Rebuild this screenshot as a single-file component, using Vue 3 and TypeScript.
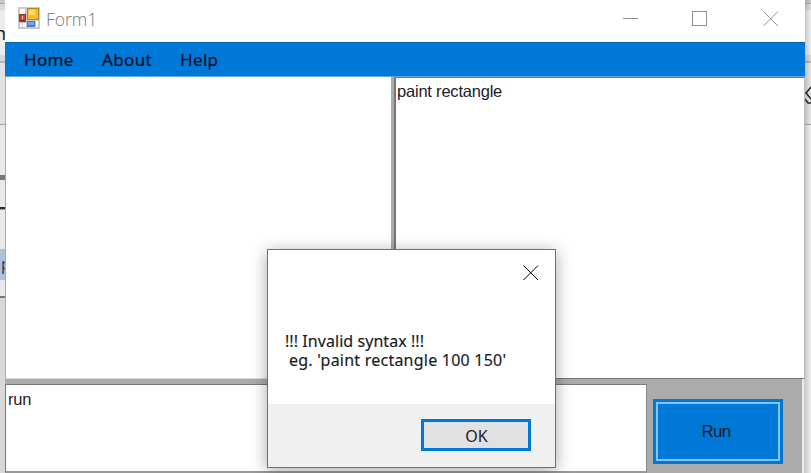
<script setup lang="ts">
import { ref } from 'vue'

const menuItems = ['Home', 'About', 'Help']
const program = ref<string>('paint rectangle')
const command = ref<string>('run')
</script>

<template>
  <div class="desktop">
    <div class="behind left">
      <span class="letter top-letter">n</span>
      <i class="bar gray"></i>
      <i class="bar black"></i>
      <span class="selected">p</span>
      <i class="bar bottom"></i>
    </div>

    <main class="window">
      <header class="titlebar">
        <svg class="app-icon" width="22" height="22" viewBox="0 0 22 22">
          <rect width="22" height="22" fill="#c8c8c8" />
          <path d="M2 2h5v5H2zM9 2h1v10H9zM2 16h2v4H2zM5 16h3v4H5zM18 14h2v6h-2z" fill="#fff" />
          <rect x="1" y="7" width="7" height="8" fill="#a92b22" />
          <rect x="2" y="8" width="5" height="5" fill="#cc443a" />
          <rect x="4" y="9" width="1" height="3" fill="#f6c5bd" />
          <rect x="9" y="1" width="12" height="12" fill="#b98a10" />
          <rect x="10" y="2" width="10" height="10" fill="#f2bd33" />
          <rect x="11" y="3" width="6" height="5" fill="#ffdc70" />
          <rect x="9" y="14" width="8" height="6" fill="#4479d2" />
          <rect x="10" y="15" width="6" height="3" fill="#76a3ed" />
        </svg>
        <span class="title">Form1</span>
        <svg class="controls" width="156" height="16" viewBox="0 0 156 16" fill="none" stroke="#8f8f8f">
          <path d="M0 7.500h15" />
          <rect x="69.500" y="0.500" width="14" height="14" />
          <path d="M140.500 0.500l14.500 14.500M155 0.500L140.500 15" />
        </svg>
      </header>

      <nav class="menu">
        <span v-for="item in menuItems" :key="item">{{ item }}</span>
      </nav>

      <section class="work">
        <div class="canvas"></div>
        <div class="splitter"></div>
        <div class="editor"><span>{{ program }}</span></div>
      </section>

      <section class="console">
        <div class="command"><span>{{ command }}</span></div>
        <button class="run"><span>Run</span></button>
      </section>
    </main>

    <div class="behind right">
      <svg width="6" height="22" viewBox="0 0 6 22" fill="none" stroke="#222" stroke-width="1.500">
        <path d="M7 1L1 8l6 7M0 14l3 4h4" />
      </svg>
    </div>

    <div class="dialog">
      <div class="dialog-body">
        <svg class="dialog-close" width="16" height="16" viewBox="0 0 16 16" stroke="#000" stroke-width="1">
          <path d="M.5.5l14.500 14.500M15 .5L.5 15" />
        </svg>
        <p class="line-one">!!! Invalid syntax !!!</p>
        <p class="line-two">eg. 'paint rectangle 100 150'</p>
      </div>
      <div class="dialog-footer">
        <button class="ok"><span>OK</span></button>
      </div>
    </div>
  </div>
</template>

<style>
body {
  margin: 0;
  overflow: hidden;
}
</style>

<style scoped>
* {
  box-sizing: border-box;
}
.desktop {
  position: relative;
  display: flex;
  width: 811px;
  height: 473px;
  overflow: hidden;
  background: #fff;
}
.behind {
  display: flex;
  flex-direction: column;
  overflow: hidden;
  height: 473px;
  flex: none;
}
.left {
  width: 5px;
  background: linear-gradient(#c9c9c9 0 3px, #aaa 3px 4px, #dadada 4px 10px, #ececec 10px 55px, #d8d8d8 55px 61px, #b5b5b5 61px 63px, #e2e2e2 63px 124px, #a6a6a6 124px 125px, #e9e9e9 125px 296px, #d8d8d8 296px);
}
.right {
  width: 6px;
  padding-top: 85px;
  background:
    linear-gradient(90deg, rgba(0, 0, 0, .16), transparent),
    linear-gradient(#c9c9c9 0 3px, #aaa 3px 4px, #dadada 4px 10px, #eee 10px 55px, #d8d8d8 55px 61px, #b5b5b5 61px 63px, #e6e6e6 63px 124px, #a6a6a6 124px 125px, #f0f0f0 125px);
}
.letter {
  height: 24px;
  margin: 21px 0 0 -5px;
  font: 18px/24px "Open Sans", sans-serif;
  color: #111;
}
.bar {
  flex: none;
  width: 5px;
}
.gray {
  height: 5px;
  margin-top: 130px;
  background: #777;
}
.black {
  height: 3px;
  margin-top: 27px;
  background: linear-gradient(#292929 66%, #999 66%);
}
.selected {
  height: 31px;
  margin-top: 39px;
  padding-left: 1px;
  font: 16px/31px "Open Sans", sans-serif;
  color: #293450;
  background: #a9c2e0;
}
.bottom {
  height: 2px;
  margin-top: 16px;
  background: #777;
}
.window {
  display: flex;
  flex-direction: column;
  width: 800px;
  height: 473px;
  flex: none;
  background: #ababab;
}
.titlebar {
  display: flex;
  height: 42px;
  background: #fff;
}
.app-icon {
  margin: 7px 0 0 13px;
}
.title {
  margin: 7px 0 0 6px;
  font: 17.500px/24px "Open Sans", sans-serif;
  font-weight: 300;
  color: #777;
}
.controls {
  margin: 11px 26px 0 auto;
}
.menu {
  display: flex;
  height: 35px;
  padding-left: 19px;
  border-top: 1px solid #0863ad;
  border-bottom: 1px solid #65a7df;
  background: #0078d7;
  font: 17px/34px "Noto Sans", sans-serif;
  letter-spacing: .35px;
  color: #03101e;
  -webkit-text-stroke: .2px #03101e;
}
.menu span {
  width: 78px;
  white-space: nowrap;
}
.work {
  display: flex;
  height: 302px;
  border-left: 1px solid #aaa;
  background: #fff;
}
.canvas {
  width: 385px;
  border-bottom: 1px solid #ddd;
}
.splitter {
  width: 3px;
  background: #ababab;
}
.editor {
  flex: 1;
  border: solid #777;
  border-width: 1px 1px 1px 2px;
  border-right-color: #bbb;
  background: #fff;
}
.editor span,
.command span {
  display: block;
  font: 16.500px/20px "Liberation Sans", Arial, sans-serif;
  color: #202027;
  white-space: nowrap;
}
.editor span {
  margin: 3px 0 0 1px;
  letter-spacing: -.21px;
}
.console {
  display: flex;
  height: 94px;
  padding: 5px 0 0;
  background: linear-gradient(90deg, #ababab 797px, #eee 797px 799px, #ccc 799px);
}
.command {
  width: 642px;
  height: 89px;
  border: solid #777;
  border-width: 1px 1px 2px;
  border-color: #777 #888 #999 #777;
  background: #fff;
}
.command span {
  margin: 4px 0 0 2px;
  letter-spacing: -.2px;
}
button {
  display: flex;
  align-items: center;
  justify-content: center;
  padding: 0;
  border: 0;
  border-radius: 0;
}
.run {
  width: 130px;
  height: 65px;
  margin: 15px 0 0 6px;
  border: 3px solid #0078d7;
  outline: 2px solid #8ac2ee;
  outline-offset: -5px;
  background: #0078d7;
  font: 17px/20px "Liberation Sans", Arial, sans-serif;
  color: #061a2b;
  letter-spacing: -.7px;
}
.run span {
  padding: 1px 4px 0 0;
}
.dialog {
  position: absolute;
  left: 267px;
  top: 249px;
  width: 289px;
  height: 219px;
  border: 1px solid #707070;
  background: #fff;
  box-shadow: 0 3px 16px rgba(0, 0, 0, .34);
}
.dialog-body {
  display: flex;
  flex-direction: column;
  height: 154px;
  font: 16px/19px "Noto Sans", sans-serif;
  color: #18181d;
  -webkit-text-stroke: .15px #18181d;
}
.dialog-close {
  flex: none;
  margin: 15px 16px 0 auto;
}
.dialog-body p {
  margin: 0;
  height: 19px;
  white-space: pre;
}
.dialog-body .line-one {
  margin: 51px 0 0 17px;
  letter-spacing: .06px;
}
.dialog-body .line-two {
  margin-left: 21px;
  letter-spacing: .23px;
}
.dialog-footer {
  display: flex;
  justify-content: flex-end;
  height: 63px;
  padding: 15px 24px 0 0;
  background: #f0f0f0;
}
.ok {
  width: 110px;
  height: 32px;
  border: 3px solid #0078d7;
  background: #e1e1e1;
  font: 16px/20px "Noto Sans", sans-serif;
  color: #202025;
}
.ok span {
  padding: 1px 0 0 1px;
}
</style>
